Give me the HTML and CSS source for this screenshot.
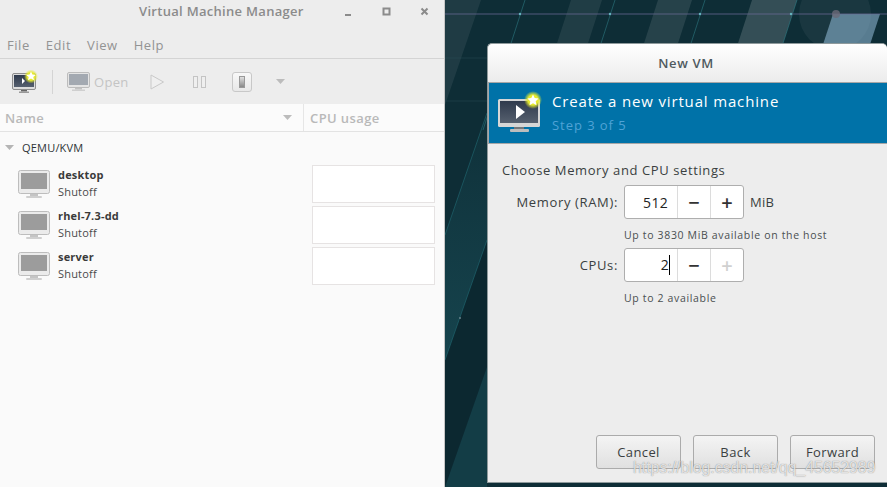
FILE: index.html
```html
<!DOCTYPE html>
<html lang="en">
<head>
<meta charset="utf-8">
<title>Virtual Machine Manager</title>
<link rel="stylesheet" href="styles.css">
</head>
<body>
<svg width="0" height="0" class="defs">
  <defs>
    <symbol id="mon-grey" viewBox="0 0 32 28">
      <rect x="0.5" y="0.5" width="31" height="23" rx="2" fill="#ebebeb" stroke="#bdbdbd"/>
      <rect x="3" y="3" width="26" height="16" fill="#9c9c9c"/>
      <rect x="12" y="24" width="8" height="2" fill="#c4c4c4"/>
      <rect x="8" y="26" width="16" height="2" rx="1" fill="#cfcfcf"/>
    </symbol>
    <radialGradient id="glow">
      <stop offset="0.55" stop-color="#e6ea2e"/>
      <stop offset="1" stop-color="#e6ea2e" stop-opacity="0"/>
    </radialGradient>
    <linearGradient id="scr" x1="0" y1="0" x2="0" y2="1">
      <stop offset="0" stop-color="#2f3a4c"/>
      <stop offset="1" stop-color="#56606f"/>
    </linearGradient>
    <linearGradient id="stripa" x1="0" y1="0" x2="0" y2="1">
      <stop offset="0" stop-color="#1c5660" stop-opacity=".1"/>
      <stop offset="1" stop-color="#1c5660" stop-opacity=".55"/>
    </linearGradient>
  </defs>
</svg>
<main class="manager">
  <header class="titlebar">
    <span class="title">Virtual Machine Manager</span>
    <span class="winctl">
      <svg width="10" height="10" viewBox="0 0 10 10"><rect x="1" y="7" width="6" height="2" fill="#8b8b8b"/></svg>
      <svg width="10" height="10" viewBox="0 0 10 10"><rect x="1.5" y="1.5" width="6" height="6" fill="none" stroke="#8b8b8b" stroke-width="2"/></svg>
      <svg width="10" height="10" viewBox="0 0 10 10"><path d="M1.5 1.5l6 6M7.500 1.500l-6 6" stroke="#8b8b8b" stroke-width="2" fill="none"/></svg>
    </span>
  </header>
  <nav class="menubar">
    <span>File</span><span>Edit</span><span>View</span><span>Help</span>
  </nav>
  <div class="toolbar">
    <svg class="tb-new" width="26" height="24" viewBox="0 0 26 24">
      <rect x="0.500" y="3.500" width="23" height="16" rx="1.500" fill="#dcdcdc" stroke="#8d8d8d"/>
      <rect x="2" y="5" width="20" height="12" fill="url(#scr)"/>
      <path d="M10 8l3 3-3 3z" fill="#fff"/>
      <rect x="9" y="20" width="6" height="1.500" fill="#666"/>
      <rect x="7" y="21.500" width="10" height="1.500" fill="#999"/>
      <circle cx="19" cy="6.500" r="7" fill="url(#glow)"/>
      <path d="M19 1.500l1.400 3 3.300.4-2.400 2.200.7 3.200-3-1.700-3 1.700.7-3.200-2.400-2.200 3.300-.4z" fill="#fff"/>
    </svg>
    <span class="tb-sep"></span>
    <svg class="tb-open" width="23" height="20" viewBox="0 0 23 20">
      <rect x="0.500" y="0.500" width="22" height="15" rx="1.500" fill="#e4e4e4" stroke="#bcbcbc"/>
      <rect x="2" y="2" width="19" height="11" fill="#a3a9b1"/>
      <rect x="8" y="16" width="7" height="1.500" fill="#c2c2c2"/>
      <rect x="5" y="17.500" width="13" height="1.500" fill="#cfcfcf"/>
    </svg>
    <span class="tb-label">Open</span>
    <svg class="tb-play" width="15" height="16" viewBox="0 0 15 16"><path d="M1 1l12.500 7L1 15z" fill="#efefef" stroke="#c9c9c9"/></svg>
    <svg class="tb-pause" width="13" height="12" viewBox="0 0 13 12"><rect x="0.500" y="0.500" width="4" height="11" fill="#efefef" stroke="#c4c4c4"/><rect x="8.500" y="0.500" width="4" height="11" fill="#efefef" stroke="#c4c4c4"/></svg>
    <span class="tb-stop"><span class="tb-stop-in"></span></span>
    <svg class="tb-arrow" width="9" height="5" viewBox="0 0 9 5"><path d="M0 0h9L4.500 5z" fill="#bcbcbc"/></svg>
  </div>
  <div class="colheads">
    <div class="col-name">Name
      <svg width="9" height="5" viewBox="0 0 9 5"><path d="M0 0h9L4.500 5z" fill="#bcbcbc"/></svg>
    </div>
    <div class="col-cpu">CPU usage</div>
  </div>
  <section class="vmlist">
    <div class="group">
      <svg width="9" height="5" viewBox="0 0 9 5"><path d="M0 0h9L4.500 5z" fill="#b5b5b5"/></svg>
      <span>QEMU/KVM</span>
    </div>
    <div class="vm">
      <svg class="vm-icon" width="32" height="28"><use href="#mon-grey"/></svg>
      <div class="vm-text"><b>desktop</b><span>Shutoff</span></div>
      <div class="spark"></div>
    </div>
    <div class="vm">
      <svg class="vm-icon" width="32" height="28"><use href="#mon-grey"/></svg>
      <div class="vm-text"><b>rhel-7.3-dd</b><span>Shutoff</span></div>
      <div class="spark"></div>
    </div>
    <div class="vm">
      <svg class="vm-icon" width="32" height="28"><use href="#mon-grey"/></svg>
      <div class="vm-text"><b>server</b><span>Shutoff</span></div>
      <div class="spark"></div>
    </div>
  </section>
</main>
<div class="desktop">
  <svg class="wallpaper" width="442" height="487" viewBox="0 0 442 487">
    <rect width="442" height="487" fill="#0e2d36"/>
    <path d="M36 0H0V105z" fill="#fff" opacity=".07"/>
    <path d="M42 113L0 235V360L42 240z" fill="url(#stripa)"/>
    <path d="M42 367L0 487H42z" fill="#1c5660" opacity=".4"/>
    <path d="M0 360V487L42 367V240z" fill="#000" opacity=".1"/>
    <path d="M157 0h-31l-42 130h31z" fill="#fff" opacity=".08"/>
    <path d="M247 0h-34l-42 130h34z" fill="#fff" opacity=".1"/>
    <circle cx="390" cy="14" r="36" fill="#fff" opacity=".05"/>
    <path d="M352 0h-45l-42 130h45z" fill="#fff" opacity=".16"/>
    <path d="M435 14h-47l-38 116h47z" fill="#8fb6d2" opacity=".58"/>
    <g stroke="#2f7f88" stroke-width="1" opacity=".55" fill="none">
      <path d="M80 0L38 130M170 0L128 130M260 0L218 130M352 0L310 130"/>
    </g>
    <path d="M42 113L0 235M42 240L0 360" stroke="#226a74" stroke-width="1" opacity=".6" fill="none"/>
    <path d="M0 14H442" stroke="#6b6a95" stroke-width="1" opacity=".75"/>
    <path d="M0 58H42M0 101H42" stroke="#2a4e58" stroke-width="1" opacity=".45"/>
    <g fill="#67b5c0"><circle cx="75" cy="14" r="1.200"/><circle cx="165" cy="14" r="1.200"/><circle cx="255" cy="14" r="1.200"/><circle cx="346" cy="14" r="1.200"/></g>
    <circle cx="391" cy="14" r="4" fill="#6c6a78" opacity=".8"/>
    <circle cx="15" cy="318" r="1" fill="#67808a"/>
  </svg>
  <section class="dialog">
    <header class="dlg-title">New VM</header>
    <div class="banner">
      <svg class="banner-icon" width="46" height="42" viewBox="0 0 46 42">
        <rect x="1" y="8" width="42" height="28" rx="1.500" fill="#d6d6d6"/>
        <rect x="3" y="10" width="38" height="22" fill="url(#scr)"/>
        <path d="M19 14l9 7-9 7z" fill="#fff"/>
        <rect x="17" y="36" width="10" height="2" fill="#77787a"/>
        <rect x="13" y="38" width="19" height="3" rx="1" fill="#bdbdbd"/>
        <circle cx="36" cy="9" r="9" fill="url(#glow)"/>
        <path d="M36 3.500l1.700 3.600 3.900.5-2.900 2.700.8 3.900-3.500-2-3.500 2 .8-3.900-2.900-2.700 3.900-.5z" fill="#fff"/>
      </svg>
      <div class="banner-text">
        <div class="banner-h">Create a new virtual machine</div>
        <div class="banner-s">Step 3 of 5</div>
      </div>
    </div>
    <div class="dlg-body">
      <p class="intro">Choose Memory and CPU settings</p>
      <div class="form">
        <label class="lbl">Memory (RAM):</label>
        <div class="spin">
          <span class="spin-val">512</span>
          <span class="spin-btn">−</span>
          <span class="spin-btn">+</span>
        </div>
        <span class="unit">MiB</span>
        <p class="hint">Up to 3830 MiB available on the host</p>
        <label class="lbl">CPUs:</label>
        <div class="spin">
          <span class="spin-val"><span class="caret">2</span></span>
          <span class="spin-btn">−</span>
          <span class="spin-btn off">+</span>
        </div>
        <span></span>
        <p class="hint">Up to 2 available</p>
      </div>
    </div>
    <footer class="actions">
      <button class="btn">Cancel</button>
      <button class="btn">Back</button>
      <button class="btn">Forward</button>
    </footer>
  </section>
  <span class="watermark">https://blog.csdn.net/qq_45652989</span>
</div>
</body>
</html>
```
FILE: styles.css
```css
* { box-sizing: border-box; }
html, body { margin: 0; height: 100%; }
body {
  display: flex;
  width: 887px;
  height: 487px;
  overflow: hidden;
  font-family: "Open Sans", "Noto Sans", sans-serif;
  font-size: 13px;
  color: #2e3436;
}
.defs { position: absolute; }
.manager {
  width: 445px;
  flex: none;
  display: flex;
  flex-direction: column;
  background: #ededed;
  border-right: 1px solid #c6c6c6;
}
.titlebar {
  height: 30px;
  display: flex;
  align-items: center;
  justify-content: flex-end;
  position: relative;
}
.title {
  position: absolute;
  left: 139px;
  top: 2px;
  font-weight: 600;
  font-size: 13px;
  letter-spacing: .3px;
  color: #8b8b8b;
}
.winctl { display: flex; gap: 28px; padding-right: 14px; margin-top: -7px; }
.menubar {
  height: 29px;
  display: flex;
  gap: 16px;
  padding: 6px 0 0 7px;
  border-bottom: 1px solid #d4d4d4;
  font-size: 13px;
  letter-spacing: .55px;
  color: #939393;
}
.toolbar {
  height: 45px;
  display: flex;
  align-items: center;
  padding-left: 12px;
}
.tb-new { flex: none; }
.tb-sep { width: 1px; height: 24px; background: #d4d4d4; margin: 0 14px 0 14px; }
.tb-label { color: #c4c4c4; font-size: 13px; letter-spacing: .3px; margin: 0 21px 0 4px; }
.tb-play { margin-right: 28px; }
.tb-pause { margin-right: 26px; }
.tb-stop {
  width: 20px; height: 20px; margin-right: 24px;
  display: flex; align-items: center; justify-content: center;
  border: 1px solid #c8c8c8; border-radius: 3px;
  background: linear-gradient(#f8f8f8, #e8e8e8);
}
.tb-stop-in { width: 6px; height: 12px; background: linear-gradient(#e0e0e0, #888); border: 1px solid #999; }
.colheads {
  height: 28px;
  display: flex;
  background: #fbfbfb;
  border-bottom: 1px solid #e3e3e3;
  font-size: 13px;
  font-weight: 600;
  letter-spacing: .4px;
  color: #b9b9b9;
}
.col-name {
  width: 304px;
  display: flex;
  align-items: center;
  justify-content: space-between;
  padding: 0 11px 0 5px;
  border-right: 1px solid #e6e6e6;
}
.col-cpu { padding: 5px 0 0 6px; }
.vmlist { flex: 1; background: #fafafa; }
.group {
  height: 33px;
  display: flex;
  align-items: center;
  gap: 8px;
  padding: 0 0 2px 5px;
  font-size: 11px;
  letter-spacing: .2px;
}
.vm { height: 41px; display: flex; align-items: flex-start; padding-left: 18px; }
.vm-icon { flex: none; margin-top: 5px; }
.vm-text { margin: 1px 0 0 8px; display: flex; flex-direction: column; font-size: 11px; line-height: 17px; letter-spacing: .2px; }
.vm-text b { font-weight: 700; color: #3a3a3a; }
.vm-text span { color: #4a4a4a; }
.spark {
  width: 123px; height: 38px;
  margin-left: auto; margin-right: 9px;
  background: #fff;
  border: 1px solid #e6e3e3;
}
.desktop { flex: 1; position: relative; overflow: hidden; }
.wallpaper { position: absolute; left: 0; top: 0; }
.dialog {
  position: absolute;
  left: 42px;
  top: 43px;
  width: 400px;
  height: 440px;
  display: flex;
  flex-direction: column;
  background: #ededed;
  border-radius: 5px 5px 0 0;
  border-top: 1px solid #8f9a9c;
  border-left: 1px solid #8f9a9c;
  border-bottom: 1px solid #8f9a9c;
}
.dlg-title {
  height: 38px;
  display: flex;
  align-items: center;
  justify-content: center;
  padding-right: 3px;
  background: linear-gradient(#fff, #ececec);
  border-radius: 5px 5px 0 0;
  font-weight: 600;
  font-size: 13px;
  letter-spacing: .65px;
  color: #4f5a60;
}
.banner {
  height: 62px;
  display: flex;
  align-items: center;
  gap: 9px;
  padding-left: 8px;
  background: #0072a8;
  border: 1px solid #a7a7a7;
  border-right: 0;
}
.banner-icon { flex: none; margin-top: -2px; }
.banner-h { color: #fff; font-size: 15px; letter-spacing: .85px; line-height: 24px; }
.banner-s { color: #4fa3d6; font-size: 13px; letter-spacing: .95px; line-height: 24px; }
.dlg-body { flex: 1; padding: 17px 0 0 14px; }
.intro { margin: 0 0 6px; font-size: 13px; letter-spacing: .6px; line-height: 18px; color: #3a3f41; }
.form {
  display: grid;
  grid-template-columns: 116px 120px auto;
  column-gap: 6px;
  align-items: center;
  justify-content: start;
}
.lbl { text-align: right; font-size: 13px; letter-spacing: .65px; color: #3a3f41; }
.spin {
  height: 34px;
  display: flex;
  background: #fff;
  border: 1px solid #aeaeae;
  border-radius: 3px;
}
.spin-val { flex: 1; display: flex; align-items: center; justify-content: flex-end; padding-right: 9px; font-size: 14px; letter-spacing: .3px; color: #222; }
.caret { border-right: 1px solid #000; line-height: 20px; padding-right: 0; margin-right: -2px; }
.spin-btn {
  width: 33px;
  display: flex; align-items: center; justify-content: center;
  border-left: 1px solid #dcdcdc;
  font-size: 20px; font-weight: 600; color: #333;
}
.spin-btn.off { color: #d0d0d0; }
.unit { font-size: 13px; letter-spacing: .3px; color: #3a3f41; }
.hint { grid-column: 2 / 4; margin: 0; height: 29px; padding-top: 9px; font-size: 10.500px; letter-spacing: .66px; line-height: 15px; color: #4a4f51; white-space: nowrap; }
.actions { display: flex; justify-content: flex-end; gap: 12px; padding: 0 12px 13px 0; }
.btn {
  width: 85px; height: 34px; padding: 0;
  font: inherit; font-size: 13px; letter-spacing: .4px; color: #3a3f41;
  background: linear-gradient(#f4f4f4, #e0e0e0);
  border: 1px solid #ababab;
  border-radius: 3px;
}
.watermark {
  position: absolute;
  left: 188px;
  top: 459px;
  font-family: "Liberation Sans", Arial, sans-serif;
  font-size: 15.800px;
  color: rgba(255,255,255,.75);
  text-shadow: 0 0 1px rgba(90,90,90,.8);
  white-space: nowrap;
}
```
